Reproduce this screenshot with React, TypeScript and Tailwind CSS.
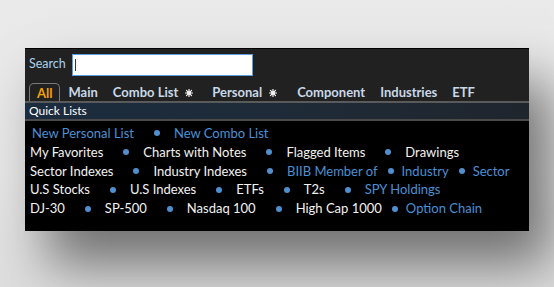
import React from "react";

type Item = { label: string; link?: boolean; tight?: boolean };

const ROWS: { pl: number; items: Item[] }[] = [
  {
    pl: 7,
    items: [
      { label: "New Personal List", link: true },
      { label: "New Combo List", link: true },
    ],
  },
  {
    pl: 5,
    items: [
      { label: "My Favorites" },
      { label: "Charts with Notes" },
      { label: "Flagged Items" },
      { label: "Drawings" },
    ],
  },
  {
    pl: 5,
    items: [
      { label: "Sector Indexes" },
      { label: "Industry Indexes" },
      { label: "BIIB Member of", link: true },
      { label: "Industry", link: true, tight: true },
      { label: "Sector", link: true, tight: true },
    ],
  },
  {
    pl: 5,
    items: [
      { label: "U.S Stocks" },
      { label: "U.S Indexes" },
      { label: "ETFs" },
      { label: "T2s" },
      { label: "SPY Holdings", link: true },
    ],
  },
  {
    pl: 5,
    items: [
      { label: "DJ-30" },
      { label: "SP-500" },
      { label: "Nasdaq 100" },
      { label: "High Cap 1000" },
      { label: "Option Chain", link: true, tight: true },
    ],
  },
];

function Burst() {
  return (
    <svg width="8" height="8" viewBox="0 0 10 10" className="ml-[7px] inline-block">
      <g stroke="#f2f2f2" strokeWidth="1.5" strokeLinecap="round">
        <line x1="5" y1="0.6" x2="5" y2="9.4" />
        <line x1="0.6" y1="5" x2="9.4" y2="5" />
        <line x1="1.8" y1="1.8" x2="8.2" y2="8.2" />
        <line x1="8.2" y1="1.8" x2="1.8" y2="8.2" />
      </g>
      <circle cx="5" cy="5" r="2.6" fill="#f2f2f2" />
    </svg>
  );
}

function Dot({ tight }: { tight?: boolean }) {
  return (
    <span
      className={
        tight
          ? "ml-[10px] mr-[8px] inline-block h-[6px] w-[6px] rounded-full bg-[#4f8fce]"
          : "ml-[20px] mr-[14px] inline-block h-[6px] w-[6px] rounded-full bg-[#4f8fce]"
      }
    />
  );
}

const tab = "flex h-[18px] items-center pt-[2px]";

export default function App() {
  return (
    <div className="h-[287px] w-[554px] overflow-hidden bg-[linear-gradient(180deg,#eaeaea_0%,#e6e6e6_60%,#dedede_100%)] pl-[25px] pt-[48px] font-['Segoe_UI','Lato','Open_Sans',sans-serif]">
      <div className="flex h-[183px] w-[504px] flex-col bg-black shadow-[22px_34px_50px_rgba(0,0,0,0.5)]">
        {/* header */}
        <div className="border-t border-black bg-[#212121]">
          <div className="flex h-[29px] items-center pl-[4px] pt-[2px]">
            <span className="text-[12.5px] text-[#a9d2ee]">Search</span>
            <div className="ml-[6px] flex h-[22px] w-[181px] items-center border border-[#5b9ee0] bg-white pl-[2px]">
              <span className="h-[12px] w-px bg-[#333]" />
            </div>
          </div>
          <div className="flex h-[23px] items-end pl-[4px] text-[13px] font-bold text-[#c9d8e6]">
            <div className={`${tab} rounded-t-[5px] border border-b-0 border-[#7a7a7a] px-[7px] text-[#f5a300]`}>
              All
            </div>
            <div className={`${tab} pl-[8px]`}>Main</div>
            <div className={`${tab} pl-[15px]`}>
              Combo List
              <Burst />
            </div>
            <div className={`${tab} pl-[19px]`}>
              Personal
              <Burst />
            </div>
            <div className={`${tab} pl-[20px]`}>Component</div>
            <div className={`${tab} pl-[15px]`}>Industries</div>
            <div className={`${tab} pl-[15px]`}>ETF</div>
          </div>
        </div>
        <div className="h-[2px] bg-[#5a5a5a]" />
        <div className="flex h-[16px] items-center bg-[linear-gradient(90deg,#1b2c3f_0%,#1f2a36_60%,#1f252d_100%)] pl-[4px] text-[12px] text-white">
          Quick Lists
        </div>
        <div className="h-[2px] bg-[#4a4a4a]" />
        {/* lists */}
        <div className="flex flex-col pt-[3px] text-[13px] leading-[18.8px]">
          {ROWS.map((row, i) => (
            <div key={i} className="flex items-center" style={{ paddingLeft: row.pl }}>
              {row.items.map((it, j) => (
                <React.Fragment key={it.label}>
                  {j > 0 && <Dot tight={it.tight} />}
                  <span className={it.link ? "text-[#4a90d6]" : "text-[#f2f2f2]"}>{it.label}</span>
                </React.Fragment>
              ))}
            </div>
          ))}
        </div>
      </div>
    </div>
  );
}
